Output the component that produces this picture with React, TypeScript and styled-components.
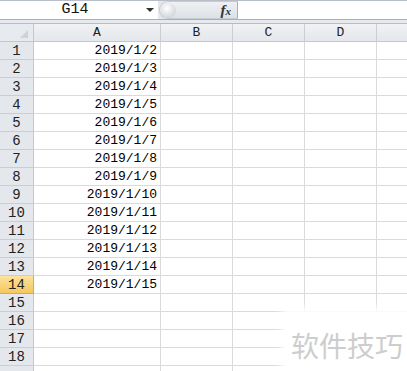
import React from "react";
import styled, { createGlobalStyle } from "styled-components";

const GlobalStyle = createGlobalStyle`
  html, body {
    margin: 0;
    padding: 0;
    background: #ffffff;
    overflow: hidden;
  }
  body {
    font-family: "Liberation Mono", "Noto Sans CJK SC", monospace;
  }
`;

const dates = [
  "2019/1/2", "2019/1/3", "2019/1/4", "2019/1/5", "2019/1/6", "2019/1/7",
  "2019/1/8", "2019/1/9", "2019/1/10", "2019/1/11", "2019/1/12", "2019/1/13",
  "2019/1/14", "2019/1/15",
];

const columns = ["A", "B", "C", "D", ""];
const visibleRows = 18;

export default function App() {
  return (
    <Page>
      <GlobalStyle />
      <FormulaBar>
        <NameBox>
          <NameText>G14</NameText>
          <DropArrow />
        </NameBox>
        <FxArea>
          <Knob />
          <Fx>
            f<sub>x</sub>
          </Fx>
        </FxArea>
        <FormulaInput />
      </FormulaBar>
      <Splitter />
      <Sheet>
        <Corner>
          <CornerTriangle />
        </Corner>
        {columns.map((c, i) => (
          <ColHeader key={"h" + i}>{c}</ColHeader>
        ))}
        {Array.from({ length: visibleRows + 1 }, (_, r) => (
          <React.Fragment key={r}>
            {/* the 19th row is only a sliver at the bottom edge */}
            <RowHeader $active={r === 13}>{r < visibleRows ? r + 1 : ""}</RowHeader>
            {columns.map((_, ci) => (
              <Cell key={ci}>{ci === 0 && dates[r] ? dates[r] : ""}</Cell>
            ))}
          </React.Fragment>
        ))}
      </Sheet>
      <Watermark>软件技巧</Watermark>
    </Page>
  );
}

const Page = styled.div`
  position: relative;
  width: 407px;
  height: 371px;
  overflow: hidden;
  background: #ffffff;
`;

const FormulaBar = styled.div`
  display: flex;
  height: 20px;
  box-sizing: border-box;
  border-top: 1px solid #b7bec8;
  border-bottom: 1px solid #a7afba;
  background: #e4e8ed;
`;

const NameBox = styled.div`
  width: 158px;
  display: flex;
  align-items: center;
  background: #ffffff;
`;

const NameText = styled.span`
  flex: 1;
  text-align: center;
  font-size: 15px;
  color: #111;
  padding-left: 4px;
  line-height: 18px;
`;

const DropArrow = styled.span`
  width: 0;
  height: 0;
  margin-right: 4px;
  border-left: 4px solid transparent;
  border-right: 4px solid transparent;
  border-top: 4px solid #333;
`;

const FxArea = styled.div`
  width: 79px;
  display: flex;
  align-items: center;
  justify-content: space-between;
  box-sizing: border-box;
  margin-left: 1px;
  border-radius: 9px 0 0 9px;
  background: linear-gradient(#eef0f3, #dde1e6);
  border: 1px solid #c6ccd4;
  border-right: 1px solid #a9b0ba;
  padding: 0 6px 0 1px;
`;

const Knob = styled.span`
  width: 15px;
  height: 15px;
  border-radius: 50%;
  background: radial-gradient(circle at 40% 35%, #ffffff, #d4d8de 70%, #bfc5cd);
`;

const Fx = styled.span`
  font-family: "Liberation Serif", serif;
  font-style: italic;
  font-weight: bold;
  font-size: 15px;
  color: #333;
  line-height: 1;
  sub {
    font-size: 11px;
    vertical-align: baseline;
  }
`;

const FormulaInput = styled.div`
  flex: 1;
  background: #ffffff;
`;

const Splitter = styled.div`
  height: 4px;
  box-sizing: border-box;
  background: #e6e9ed;
  border-bottom: 1px solid #b5bcc6;
`;

const Sheet = styled.div`
  display: grid;
  grid-template-columns: 34px 127px 72px 72px 72px 40px;
  grid-template-rows: 18px;
  grid-auto-rows: 18px;
  font-size: 13px;
`;

const Corner = styled.div`
  position: relative;
  box-sizing: border-box;
  background: #e7eaee;
  border-right: 1px solid #c3c8cf;
  border-bottom: 1px solid #c3c8cf;
`;

const CornerTriangle = styled.span`
  position: absolute;
  right: 5px;
  bottom: 3px;
  width: 0;
  height: 0;
  border-left: 8px solid transparent;
  border-bottom: 8px solid #cfd3d9;
`;

const ColHeader = styled.div`
  box-sizing: border-box;
  display: flex;
  align-items: center;
  justify-content: center;
  background: linear-gradient(#f0f2f4, #e4e7eb);
  border-right: 1px solid #c9ced5;
  border-bottom: 1px solid #c3c8cf;
  color: #222;
  font-size: 13px;
`;

const RowHeader = styled.div<{ $active?: boolean }>`
  box-sizing: border-box;
  display: flex;
  align-items: center;
  justify-content: center;
  background: ${(p) => (p.$active ? "linear-gradient(#fbe29e, #f6c75d)" : "#e4e8ed")};
  border-right: 1px solid ${(p) => (p.$active ? "#e2a93f" : "#c3c8cf")};
  border-bottom: 1px solid ${(p) => (p.$active ? "#e2a93f" : "#c9ced5")};
  color: #222;
  font-size: 14px;
`;

const Cell = styled.div`
  box-sizing: border-box;
  display: flex;
  align-items: center;
  justify-content: flex-end;
  padding-right: 3px;
  border-right: 1px solid #d9dadb;
  border-bottom: 1px solid #d9dadb;
  color: #000;
  white-space: nowrap;
`;

const Watermark = styled.div`
  position: absolute;
  right: 0;
  bottom: 0;
  width: 120px;
  height: 58px;
  padding-top: 6px;
  box-sizing: border-box;
  display: flex;
  align-items: center;
  justify-content: center;
  background: #ffffff;
  box-shadow: 0 0 8px 6px #ffffff;
  font-family: "Noto Sans CJK SC", sans-serif;
  font-size: 28px;
  color: #cdcdcd;
`;
